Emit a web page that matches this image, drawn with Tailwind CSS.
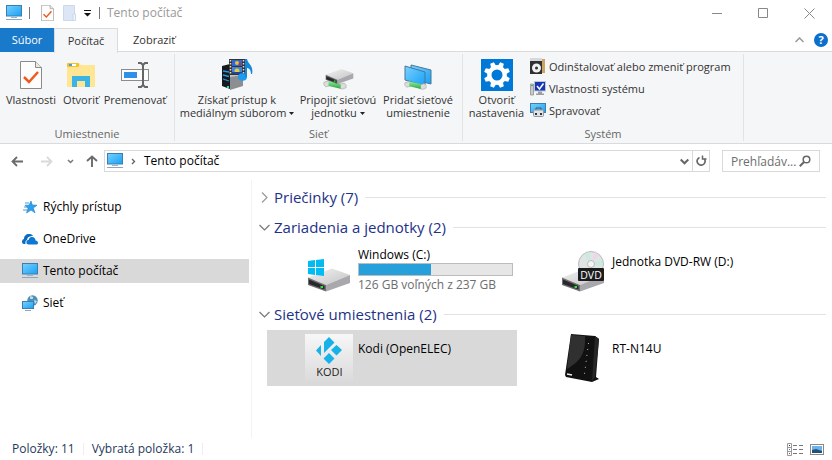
<!DOCTYPE html>
<html lang="sk">
  <head>
    <meta charset="UTF-8">
    <title>Tento počítač</title>
    <meta name="viewport" content="width=device-width, initial-scale=1.0">
    <script src="https://cdn.jsdelivr.net/npm/@tailwindcss/browser@4"></script>
  </head>
  <body class="min-h-screen flex flex-col bg-white text-black text-[12px] leading-4 font-['Open_Sans','Noto_Sans',sans-serif] overflow-x-hidden">
    <!-- shared icon shapes -->
    <svg class="absolute w-0 h-0">
      <defs>
        <linearGradient id="screen" x1="0" y1="0" x2="1" y2="1"><stop offset="0" stop-color="#78d2ff"/><stop offset="1" stop-color="#18a0f5"/></linearGradient>
        <linearGradient id="metal" x1="0" y1="0" x2="1" y2="1"><stop offset="0" stop-color="#f2f2f2"/><stop offset="1" stop-color="#c4c4c6"/></linearGradient>
        <linearGradient id="pipe" x1="0" y1="0" x2="0" y2="1"><stop offset="0" stop-color="#8df09a"/><stop offset="1" stop-color="#2fa648"/></linearGradient>
        <symbol id="monitor" viewBox="0 0 16 16">
          <rect x="0.5" y="0.5" width="15" height="10.5" fill="url(#screen)" stroke="#3c7fae"/>
          <rect x="5" y="12" width="6" height="1" fill="#9ab4c8"/>
          <rect x="0" y="14" width="16" height="1" fill="#8ea6bd"/>
        </symbol>
        <symbol id="checkpage" viewBox="0 0 22 28">
          <path d="M.5.5h15l6 6v21H.5z" fill="#fdfdfd" stroke="#8b8b8b"/>
          <path d="M15.500 .5v6h6" fill="#e8e8e8" stroke="#8b8b8b"/>
          <path d="M4 16l5 5 9-10" fill="none" stroke="#f0591c" stroke-width="2.500"/>
        </symbol>
        <symbol id="drive" viewBox="0 0 44 24">
          <path d="M1 9.500L25 .5l18 6.500-24 10z" fill="url(#metal)"/>
          <path d="M43 7v8L19 23.500V17z" fill="#a9a9ad"/>
          <path d="M1 9.500L19 17v6.500L1 17z" fill="#6f6f73"/>
          <path d="M2 11.500l15.500 6.500v3.500L2 16z" fill="#29292b"/>
          <rect x="13.500" y="18" width="2.500" height="2" fill="#35e23c"/>
        </symbol>
        <symbol id="netpipe" viewBox="0 0 26 11">
          <path d="M1 3l5-1.500 2 2-1 3.500-4 1-2-2zM19 5l4-1 2 2v3l-4 1.500-3-1z" fill="#dcdcdc" stroke="#a8a8a8" stroke-width=".7"/>
          <path d="M6 1.500l13 3v5.500L6 7z" fill="url(#pipe)"/>
        </symbol>
      </defs>
    </svg>

    <header class="h-7 flex items-center pl-1.5 pb-0.5">
      <svg class="w-4 h-4"><use href="#monitor"/></svg>
      <span class="w-px h-3 bg-[#777] ml-[7px]"></span>
      <button aria-label="Vlastnosti" class="ml-[11px]"><svg class="w-[13px] h-4"><use href="#checkpage"/></svg></button>
      <button aria-label="Nový priečinok" class="ml-[9px]">
        <svg class="w-[13px] h-4" viewBox="0 0 13 16"><path d="M.5.5h11v15H.5z" fill="#dce6f4" stroke="#cbd9ec"/><path d="M10 9h2.500v6.500H10z" fill="#eef4fb" stroke="#cbd9ec"/></svg>
      </button>
      <button aria-label="Prispôsobiť panel" class="ml-2">
        <svg class="w-[7px] h-[7px]" viewBox="0 0 7 7"><path d="M0 0h7v1H0zM0 3h7L3.500 6.500z" fill="#111"/></svg>
      </button>
      <span class="w-px h-3 bg-[#777] ml-2"></span>
      <h1 class="ml-[7px] text-[#999]">Tento počítač</h1>
      <div class="ml-auto flex items-center h-full">
        <button aria-label="Minimalizovať" class="w-[46px] flex justify-center"><svg class="w-[10px] h-[10px]" viewBox="0 0 10 10"><path d="M0 5.500h10" stroke="#888"/></svg></button>
        <button aria-label="Maximalizovať" class="w-[46px] flex justify-center"><svg class="w-[10px] h-[10px]" viewBox="0 0 10 10"><path d="M.5.5h9v9h-9z" fill="none" stroke="#888"/></svg></button>
        <button aria-label="Zavrieť" class="w-[46px] flex justify-center"><svg class="w-[11px] h-[11px]" viewBox="0 0 11 11"><path d="M.5.5l10 10M10.500 .5l-10 10" stroke="#888"/></svg></button>
      </div>
    </header>

    <nav class="h-6 flex text-[#333]">
      <button class="w-[54px] shrink-0 bg-[#1979ca] text-white text-[11px]">Súbor</button>
      <button class="w-16 shrink-0 -mb-px bg-[#f5f6f7] border border-b-0 border-[#dadbdc] relative text-[11px]">Počítač</button>
      <div class="flex-1 flex items-center border-b border-[#dadbdc]">
        <button class="px-[15px] text-[11px]">Zobraziť</button>
        <button aria-label="Zbaliť pás" class="ml-auto"><svg class="w-[9px] h-[6px]" viewBox="0 0 9 6"><path d="M.5 5l4-4 4 4" fill="none" stroke="#999" stroke-width="1.500"/></svg></button>
        <button aria-label="Pomocník" class="ml-2.5 mr-1 w-3.5 h-3.5 rounded-full bg-[#0b6fcd] text-white font-bold text-[11px] leading-[14px]">?</button>
      </div>
    </nav>

    <section class="h-[92px] flex bg-[#f5f6f7] border-b border-[#dadbdc] text-[#333] text-[11px] leading-[13px] py-0.5 whitespace-nowrap">
      <div class="w-[175px] flex flex-col border-r border-[#e2e3e4]">
        <div class="flex pl-0.5">
          <button class="w-[58px] h-[67px] shrink-0 pt-[5px] flex flex-col items-center gap-0.5">
            <svg class="w-8 h-8 p-0.5"><use href="#checkpage"/></svg>
            Vlastnosti
          </button>
          <button class="w-[42px] h-[67px] shrink-0 pt-[5px] flex flex-col items-center gap-0.5">
            <svg class="w-8 h-8" viewBox="0 0 32 32">
              <path d="M2 4h12l2 2h14v22H2z" fill="#ffe694"/>
              <rect x="2" y="4" width="12" height="4" rx="1" fill="#f5c22d"/><rect x="4" y="5" width="7" height="2" fill="#fff"/><rect x="4" y="5" width="3" height="2" fill="#4f9fd4"/>
              <path d="M7 28V17h18v11h-5v-6h-8v6z" fill="#3ab4e6"/>
            </svg>
            Otvoriť
          </button>
          <button class="w-[66px] h-[67px] shrink-0 pt-[5px] flex flex-col items-center gap-0.5">
            <svg class="w-8 h-8" viewBox="0 0 32 32">
              <rect x="2.500" y="10.500" width="27" height="11" fill="#fdfdfd" stroke="#8c8c8c"/>
              <rect x="5" y="13" width="13" height="6" fill="#2e90e8"/>
              <path d="M19 4h3l2 2 2-2h3M19 28h3l2-2 2 2h3M24 6v20" fill="none" stroke="#666" stroke-width="2"/>
            </svg>
            Premenovať
          </button>
        </div>
        <p class="mt-1.5 text-center text-[#666]">Umiestnenie</p>
      </div>
      <div class="w-72 flex flex-col border-r border-[#e2e3e4]">
        <div class="flex pl-0.5">
          <button class="w-[120px] h-[67px] shrink-0 pt-[5px] flex flex-col items-center gap-0.5">
            <svg class="w-8 h-8" viewBox="0 0 32 32">
              <path d="M1 7l8-2v25L1 27z" fill="#17191c"/>
              <path d="M9 6l13-2v23L9 31z" fill="#8d8e92"/><path d="M9 6l13-2v12L9 18z" fill="#c4c5c8"/>
              <path d="M2 12l6 1M2 16l6 1.500M2 20l6 2" stroke="#1f9be8" stroke-width="1.300"/>
              <rect x="6" y="27" width="2" height="2" fill="#2ce2b0"/>
              <rect x="8" y="0" width="16" height="16" fill="#333"/>
              <path d="M9.500 1v15M22.500 1v15" stroke="#ddd" stroke-width="1.500" stroke-dasharray="1.500 1.500"/>
              <rect x="11" y="1" width="10" height="6" fill="#3166d7"/><rect x="11" y="8" width="10" height="7" fill="#3e85e2"/>
              <circle cx="16" cy="4" r="2" fill="#f3c02d"/><circle cx="19" cy="5" r="1.500" fill="#a53e37"/><circle cx="16" cy="12" r="2.500" fill="#eacb3a"/><path d="M11 13h10v2H11z" fill="#224695"/>
              <ellipse cx="21.500" cy="18" rx="4.500" ry="3.700" fill="#1a9bef"/>
              <path d="M24 18V0h2c1 5 7 7 5 15h-1c0-4-2-6-4-6v9z" fill="#1489db"/>
            </svg>
            <span class="text-center">Získať prístup k<br>mediálnym súborom <svg class="inline w-[5px] h-[3px] mb-0.5" viewBox="0 0 5 3"><path d="M0 0h5L2.500 3z" fill="#222"/></svg></span>
          </button>
          <button class="w-[82px] h-[67px] shrink-0 pt-[5px] flex flex-col items-center gap-0.5">
            <svg class="w-8 h-8" viewBox="0 0 32 32">
              <use href="#netpipe" x="1" y="20" width="24" height="11"/>
              <use href="#drive" x="3" y="9" width="29" height="17"/>
            </svg>
            <span class="text-center">Pripojiť sieťovú<br>jednotku <svg class="inline w-[5px] h-[3px] mb-0.5" viewBox="0 0 5 3"><path d="M0 0h5L2.500 3z" fill="#222"/></svg></span>
          </button>
          <button class="w-[78px] h-[67px] shrink-0 pt-[5px] flex flex-col items-center gap-0.5">
            <svg class="w-8 h-8" viewBox="0 0 32 32">
              <path d="M9 6l20 5v14L9 20z" fill="url(#screen)" stroke="#47779b"/>
              <path d="M3 7l20 6v14L3 21z" fill="url(#screen)" stroke="#47779b"/>
              <use href="#netpipe" x="2" y="21" width="23" height="10"/>
            </svg>
            <span class="text-center">Pridať sieťové<br>umiestnenie</span>
          </button>
        </div>
        <p class="mt-1.5 text-center text-[#666]">Sieť</p>
      </div>
      <div class="w-[281px] flex flex-col border-r border-[#e2e3e4]">
        <div class="flex">
          <button class="w-[67px] h-[67px] shrink-0 pt-[5px] flex flex-col items-center gap-0.5">
            <svg class="w-8 h-8" viewBox="0 0 32 32">
              <rect width="32" height="32" fill="#0078d7"/>
              <circle cx="16" cy="16" r="7.700" fill="none" stroke="#fff" stroke-width="4.400"/>
              <g transform="rotate(22.500 16 16)">
                <path id="tooth" d="M13.200 8l.8-5h4l.8 5zM13.200 24l.8 5h4l.8-5z" fill="#fff"/>
                <use href="#tooth" transform="rotate(45 16 16)"/>
                <use href="#tooth" transform="rotate(90 16 16)"/>
                <use href="#tooth" transform="rotate(135 16 16)"/>
              </g>
            </svg>
            <span class="text-center">Otvoriť<br>nastavenia</span>
          </button>
          <div class="flex flex-col pt-px items-start">
            <button class="h-[22px] flex items-center gap-[3px]">
              <svg class="w-4 h-4" viewBox="0 0 16 16"><path d="M2 1h13v14H7z" fill="#4c8b43"/><path d="M11 1h4v14h-4z" fill="#c9a465"/><path d="M0 0h12v3H0z" fill="#d8d8d8"/><path d="M0 3h12v13H0z" fill="#303033"/><circle cx="6.500" cy="10" r="4.500" fill="#f1f1f1"/><circle cx="6.500" cy="10" r="1.500" fill="#303033"/></svg>
              Odinštalovať alebo zmeniť program
            </button>
            <button class="h-[22px] flex items-center gap-[3px]">
              <svg class="w-4 h-4" viewBox="0 0 16 16"><path d="M.5 4h3v11h-3z" fill="#c8cbce" stroke="#888" stroke-width=".7"/><rect x="1" y="5" width="2" height="1" fill="#3bba42"/><rect x="4.500" y="1.500" width="11" height="9.500" fill="#1636b8" stroke="#c4c6cb"/><path d="M7 6l2.500 3L13.500 3.500" fill="none" stroke="#fff" stroke-width="1.500"/><path d="M8 11.500h4v2h2v1.500H6v-1.500h2z" fill="#9c9ea2"/></svg>
              Vlastnosti systému
            </button>
            <button class="h-[22px] flex items-center gap-[3px]">
              <svg class="w-4 h-4" viewBox="0 0 16 16"><rect x=".5" y="1.500" width="15" height="9" fill="url(#screen)" stroke="#3c7fae"/><path d="M6 8V6h5v2" fill="none" stroke="#555"/><rect x="3.500" y="8" width="10" height="6.500" rx="1" fill="#dfe2e6" stroke="#9297a0"/><path d="M5 11h2v2H5zM10 11h2v2h-2z" fill="#333"/></svg>
              Spravovať
            </button>
          </div>
        </div>
        <p class="mt-1.5 text-center text-[#666]">Systém</p>
      </div>
    </section>

    <div class="h-9 flex items-center pl-[11px] pr-3 pb-0.5">
      <button aria-label="Späť"><svg class="w-3 h-[11px]" viewBox="0 0 12 11"><path d="M12 5.500H1.500M6 1L1.500 5.500 6 10" fill="none" stroke="#6b6b6b" stroke-width="1.800"/></svg></button>
      <button aria-label="Dopredu" class="ml-[18px]"><svg class="w-3 h-[11px]" viewBox="0 0 12 11"><path d="M0 5.500h10.500M6 1l4.500 4.500L6 10" fill="none" stroke="#dadada" stroke-width="1.800"/></svg></button>
      <button aria-label="Posledné umiestnenia" class="ml-[14px]"><svg class="w-[7px] h-[5px]" viewBox="0 0 7 5"><path d="M1 1l2.500 2.500L6 1" fill="none" stroke="#777" stroke-width="1.500"/></svg></button>
      <button aria-label="Nahor" class="ml-3"><svg class="w-3 h-3" viewBox="0 0 12 12"><path d="M6 12V1.500M1 6l5-4.500L11 6" fill="none" stroke="#6b6b6b" stroke-width="1.900"/></svg></button>
      <div class="ml-[6px] flex-1 h-[22px] flex items-center border border-[#d9d9d9] pl-0.5">
        <svg class="w-4 h-4"><use href="#monitor"/></svg>
        <svg class="ml-2 w-[5px] h-[7px]" viewBox="0 0 5 7"><path d="M1 1l2.500 2.500L1 6" fill="none" stroke="#666" stroke-width="1.400"/></svg>
        <a href="#" class="ml-2">Tento počítač</a>
        <button aria-label="História" class="ml-auto mr-[3px]"><svg class="w-[9px] h-[7px]" viewBox="0 0 9 7"><path d="M.7 1.500l3.800 3.800 3.800-3.800" fill="none" stroke="#666" stroke-width="2"/></svg></button>
        <button aria-label="Obnoviť" class="self-stretch w-[17px] flex items-center justify-center border-l border-[#d9d9d9]"><svg class="w-[11px] h-3" viewBox="0 0 11 12"><path d="M3.500 2.500A4 4 0 1 0 8.500 4" fill="none" stroke="#666" stroke-width="1.700"/><path d="M10.500 4H6.500V.5" fill="none" stroke="#666" stroke-width="1.500"/></svg></button>
      </div>
      <label class="ml-3 w-[98px] h-[22px] flex items-center border border-[#d9d9d9] pl-2 pr-2">
        <input type="text" aria-label="Prehľadávať" placeholder="Prehľadáv..." class="w-0 flex-1 h-5 outline-none placeholder:text-[#6d6d6d]">
        <svg class="w-3 h-3" viewBox="0 0 12 12"><circle cx="7.500" cy="4.500" r="3.300" fill="none" stroke="#666" stroke-width="1.500"/><path d="M5 7L.8 11.200" stroke="#666" stroke-width="2"/></svg>
      </label>
    </div>

    <main class="flex-1 flex">
      <aside class="w-[252px] shrink-0 border-r border-[#f3f3f3] pr-0.5 pt-[15px] flex flex-col gap-2">
        <a href="#" class="h-6 flex items-center gap-[5px] pl-[22px]">
          <svg class="w-4 h-4" viewBox="0 0 16 16"><path d="M9 2l1.300 4 4.700.2-3.700 2.800 1.700 4.800-4-2.700L4.500 14l1.500-4.800L3 6.200h4z" fill="#2aa0f0" stroke="#2183c8" stroke-width=".6"/><path d="M3 4h4M2 8h3M1 11h4" stroke="#4c9bd1"/></svg>
          Rýchly prístup
        </a>
        <a href="#" class="h-6 flex items-center gap-[5px] pl-[22px]">
          <svg class="w-4 h-4" viewBox="0 0 16 16"><path d="M0 11c0-2 1-3 2-3C2 5 4 3 7 3c2 0 3 .6 4 2-4-.5-6 2-6 4-1 .5-2 1.500-1.500 4H2c-1 0-2-1-2-2z" fill="#0b6cbd"/><path d="M5 13c-1.500-2 0-4 1.500-4C7 6.500 9 6 10 6c2 0 3.500 1.500 3.500 3.500C15 9.500 16 10.500 16 12c0 1-1 1.500-2 1.500H6.500z" fill="#0b78d4"/></svg>
          OneDrive
        </a>
        <a href="#" class="h-6 flex items-center gap-[5px] pl-[22px] bg-[#d9d9d9]">
          <svg class="w-4 h-4"><use href="#monitor"/></svg>
          Tento počítač
        </a>
        <a href="#" class="h-6 flex items-center gap-[5px] pl-[22px]">
          <svg class="w-4 h-4" viewBox="0 0 16 16"><circle cx="10.500" cy="5.500" r="5.200" fill="#4d90b8"/><path d="M8 1.500c2-1 4 1 3 2S8 4 8 3zM12 5l3 1-2 3z" fill="#bfe3e9"/><rect x=".5" y="6.500" width="11" height="7" fill="url(#screen)" stroke="#3c7fae"/><path d="M3 15.500h6" stroke="#8ea6bd"/></svg>
          Sieť
        </a>
      </aside>

      <section class="flex-1 pl-[7px] pr-1.5 pt-[5px]">
        <button class="w-full h-6 flex items-center text-[15px] leading-6 text-[#1e3287]">
          <svg class="w-[11px] h-[11px]" viewBox="0 0 11 11"><path d="M3 .5l5 5-5 5" fill="none" stroke="#999" stroke-width="1.200"/></svg>
          <span class="ml-1">Priečinky (7)</span>
          <span class="ml-[7px] flex-1 h-px bg-[#e2e2e2]"></span>
        </button>
        <button class="mt-1.5 w-full h-6 flex items-center text-[15px] leading-6 text-[#1e3287]">
          <svg class="w-[11px] h-[11px]" viewBox="0 0 11 11"><path d="M.5 3l5 5 5-5" fill="none" stroke="#777" stroke-width="1.200"/></svg>
          <span class="ml-1">Zariadenia a jednotky (2)</span>
          <span class="ml-[7px] flex-1 h-px bg-[#e2e2e2]"></span>
        </button>
        <div class="mt-1 pl-2 grid grid-cols-[repeat(auto-fill,250px)] gap-x-1">
          <div class="h-14 flex pl-[38px] gap-[5px] pt-1">
            <svg class="w-12 h-12" viewBox="0 0 48 48">
              <use href="#drive" x="2" y="21" width="44" height="24"/>
              <path d="M3 14l7-1v7H3zM11 13l8-1v8h-8zM3 21h7v7l-7-1zM11 21h8v8l-8-1z" fill="#00bcf2"/>
            </svg>
            <div>
              <p>Windows (C:)</p>
              <div class="w-[155px] h-[13px] bg-[#e6e6e6] border border-[#bcbcbc]"><div class="h-full bg-[#26a0da]" style="width:47%"></div></div>
              <p class="mt-px text-[#6d6d6d]">126 GB voľných z 237 GB</p>
            </div>
          </div>
          <div class="h-14 flex pl-[38px] gap-[5px] pt-1">
            <svg class="w-12 h-12" viewBox="0 0 48 48">
              <use href="#drive" x="2" y="21" width="44" height="24"/>
              <circle cx="32" cy="17" r="12.500" fill="#dfe4e4" stroke="#bbb"/><path d="M32 17L25 7l5-2zM32 17l11-4v6z" fill="#c8ebe0"/><path d="M32 17L36 5l4 3z" fill="#eed5e9"/><circle cx="32" cy="17" r="3.500" fill="#f5f5f5" stroke="#bbb"/>
              <rect x="19" y="21" width="26" height="13" rx="1" fill="#1c1c1e"/>
              <text x="32" y="31.500" text-anchor="middle" font-size="10.500" fill="#fff">DVD</text>
            </svg>
            <p class="pt-[7px]">Jednotka DVD-RW (D:)</p>
          </div>
        </div>
        <button class="mt-[3px] w-full h-6 flex items-center text-[15px] leading-6 text-[#1e3287]">
          <svg class="w-[11px] h-[11px]" viewBox="0 0 11 11"><path d="M.5 3l5 5 5-5" fill="none" stroke="#777" stroke-width="1.200"/></svg>
          <span class="ml-1">Sieťové umiestnenia (2)</span>
          <span class="ml-[7px] flex-1 h-px bg-[#e2e2e2]"></span>
        </button>
        <div class="mt-1 pl-2 grid grid-cols-[repeat(auto-fill,250px)] gap-x-1">
          <div class="h-14 flex pl-[38px] gap-[5px] pt-1 bg-[#d9d9d9]">
            <svg class="w-12 h-12" viewBox="0 0 48 48">
              <defs><linearGradient id="kodi" x1="0" y1="0" x2="0" y2="1"><stop offset="0" stop-color="#f7f7f7"/><stop offset="1" stop-color="#dadada"/></linearGradient></defs>
              <rect width="48" height="48" fill="url(#kodi)"/>
              <path d="M24 3l5.500 5.500L19 19V8zM31.500 11l5.500 5-5.500 5.500-5.500-5.500zM24 19l5.500 5.500L24 30l-5.500-5.500zM16 11v11l-5-5.500z" fill="#17b2e7"/>
              <text x="24.500" y="42" text-anchor="middle" font-size="11" fill="#222">KODI</text>
            </svg>
            <p class="pt-[7px]">Kodi (OpenELEC)</p>
          </div>
          <div class="h-14 flex pl-[38px] gap-[5px] pt-1">
            <svg class="w-12 h-12" viewBox="0 0 48 48">
              <path d="M12 0l24 2 4 3-3 38 3 2-7 3L7 43 6 41z" fill="#111"/>
              <path d="M12 1l14 1C27 22 19 28 8 35z" fill="#303030"/>
              <path d="M36 2l4 3-4 38-3 4z" fill="#262626"/>
              <path d="M29.500 9l-4 31" stroke="#bbb" stroke-dasharray="1 5"/>
              <path d="M8 40l5 1" stroke="#eee" stroke-width="1.500"/>
            </svg>
            <p class="pt-[7px]">RT-N14U</p>
          </div>
        </div>
      </section>
    </main>

    <footer class="h-[22px] flex items-center pl-3 pr-2 text-[#1e395b]">
      <span>Položky: 11</span>
      <span class="w-px h-3 bg-[#eee] mx-2"></span>
      <span>Vybratá položka: 1</span>
      <span class="w-px h-3 bg-[#eee] ml-2"></span>
      <button aria-label="Podrobnosti" class="ml-auto"><svg class="w-4 h-[13px]" viewBox="0 0 16 13"><path d="M.5.5h4v12h-4zM.5 4.500h4M.5 8.500h4" fill="none" stroke="#999"/><path d="M6 2.500h4m2 0h4M6 6.500h4m2 0h4M6 10.500h4m2 0h4" stroke="#777"/><path d="M2 2h1v1H2z" fill="#333"/><path d="M2 6h1v1H2z" fill="#2a8de0"/><path d="M2 10h1v1H2z" fill="#d22"/></svg></button>
      <button aria-label="Veľké ikony" class="ml-[7px]"><svg class="w-3.5 h-[11px]" viewBox="0 0 14 11"><rect x=".5" y=".5" width="13" height="10" fill="#fff" stroke="#888"/><path d="M2 2h10v7H2z" fill="#69b3ee"/><path d="M2 6l4-1 6 2v2H2z" fill="#274f70"/></svg></button>
    </footer>
  </body>
</html>
